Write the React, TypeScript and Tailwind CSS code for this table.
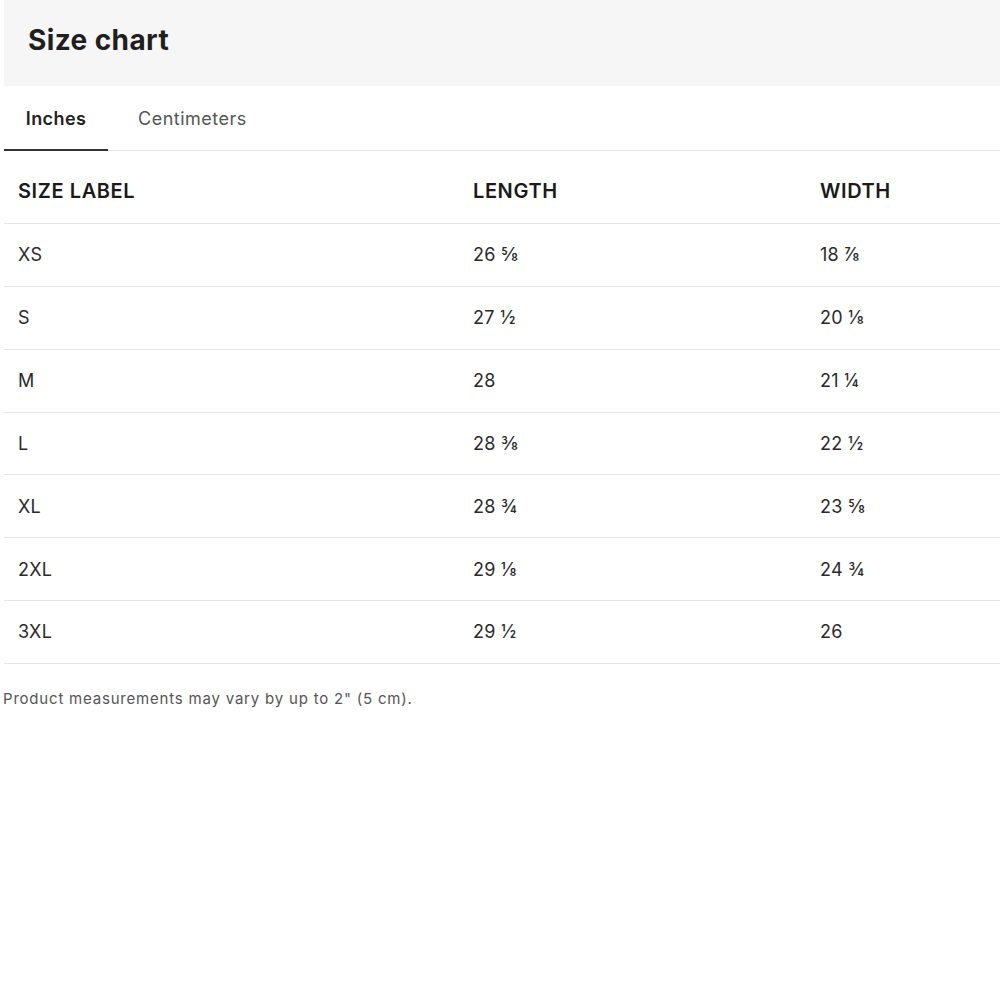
import React from "react";

const rows: [string, string, string][] = [
  ["XS", "26 ⅝", "18 ⅞"],
  ["S", "27 ½", "20 ⅛"],
  ["M", "28", "21 ¼"],
  ["L", "28 ⅜", "22 ½"],
  ["XL", "28 ¾", "23 ⅝"],
  ["2XL", "29 ⅛", "24 ¾"],
  ["3XL", "29 ½", "26"],
];

export default function App() {
  return (
    <div className="w-[1000px] h-[1000px] bg-white pl-[4px] text-[#222]" style={{ fontFamily: "Inter, 'Open Sans', sans-serif" }}>
      <div className="h-[86px] bg-[#f6f6f6] flex items-center pl-[24px]">
        <h1 className="text-[28px] font-bold text-[#1f1f1f] tracking-[0.4px] pb-[6px]">Size chart</h1>
      </div>
      <div className="flex h-[65px] border-b border-[#e6e6e6]">
        <div className="w-[104px] flex items-center justify-center border-b-2 border-[#333] mb-[-1px] pt-[1px] text-[18px] font-semibold text-[#222] tracking-[0.4px]">Inches</div>
        <div className="flex items-center pl-[30px] pt-[1px] text-[18px] text-[#555] tracking-[0.5px]">Centimeters</div>
      </div>
      <div className="grid grid-cols-[455px_347px_1fr] pl-[14px] h-[73px] items-center border-b border-[#e6e6e6] text-[20px] font-semibold text-[#1a1a1a] tracking-[0.6px] pt-[7px]">
        <div>SIZE LABEL</div>
        <div>LENGTH</div>
        <div>WIDTH</div>
      </div>
      {rows.map((r) => (
        <div key={r[0]} className="grid grid-cols-[455px_347px_1fr] pl-[14px] h-[62.85px] items-center border-b border-[#e6e6e6] text-[18px] text-[#2a2a2a] tracking-[0.3px]">
          <div>{r[0]}</div>
          <div>{r[1]}</div>
          <div>{r[2]}</div>
        </div>
      ))}
      <p className="mt-[24px] ml-[-1px] text-[15px] text-[#555] tracking-[0.8px]">Product measurements may vary by up to 2" (5 cm).</p>
    </div>
  );
}
